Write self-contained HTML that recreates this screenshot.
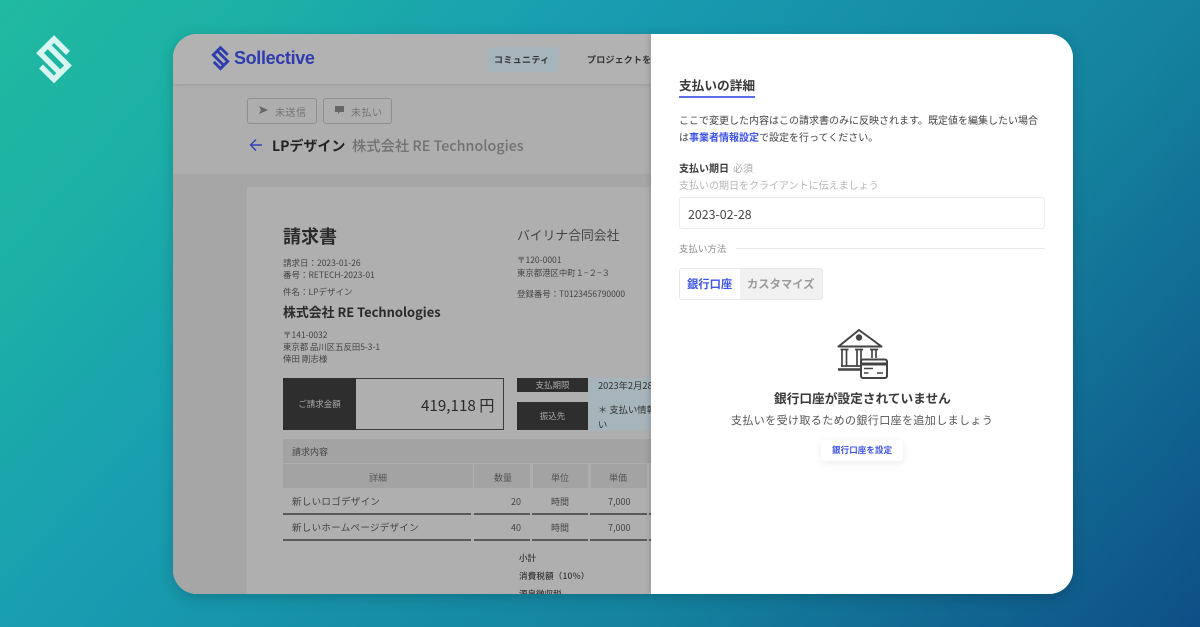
<!DOCTYPE html>
<html lang="ja"><head><meta charset="utf-8"><style>
*{box-sizing:border-box;margin:0;padding:0}
html,body{width:1200px;height:627px;overflow:hidden}
body{position:relative;font-family:"Liberation Sans","Noto Sans CJK JP",sans-serif;background:linear-gradient(132deg,#20baa0 0%,#1cb0a6 15%,#199fb0 32%,#14839f 68%,#0e4f86 100%)}
.t{position:absolute;white-space:nowrap;line-height:1;font-family:"Noto Sans CJK JP",sans-serif}
.b{position:absolute}
#card{position:absolute;left:173px;top:34px;width:900px;height:560px;border-radius:24px;overflow:hidden;background:#fff;box-shadow:0 4px 14px rgba(0,0,0,.18)}
#l{position:absolute;left:0;top:0;width:478px;height:560px;background:#aeaeae;overflow:hidden}
#r{position:absolute;left:478px;top:0;width:422px;height:560px;background:#fff;box-shadow:-2px 0 5px rgba(0,0,0,.12)}
.d{background:#2e2e2e;color:#a8a8a8;text-align:center}
.h{background:#a3a3a3}
.ln{position:absolute;height:1.500px;background:#5a5a5a}
</style></head><body>
<svg class="b" style="left:30px;top:30px" width="48" height="58" viewBox="30 30 48 58" fill="none" stroke="#d6f6ef" stroke-width="5.500" stroke-linejoin="miter"><path d="M68 53 54 39 40 53 59.500 72.500"/><path d="M41 66.500 54 79.500 68 65.500 47.500 45"/></svg>
<div id="card">
<div id="l">
 <div class="b" style="left:0;top:0;width:478px;height:50px;background:#b2b2b2;box-shadow:0 1px 3px rgba(0,0,0,.12)"></div>
 <svg class="b" style="left:34.500px;top:8.500px" width="25" height="30" viewBox="30 30 48 58" fill="none" stroke="#2f3cae" stroke-width="5.500"><path d="M68 53 54 39 40 53 59.500 72.500"/><path d="M41 66.500 54 79.500 68 65.500 47.500 45"/></svg>
 <div class="t" style="left:61px;top:15px;font:600 18px/1 'Liberation Sans',sans-serif;letter-spacing:-.35px;color:#2f3cae">Sollective</div>
 <div class="b" style="left:314px;top:13px;width:72px;height:25px;border-radius:5px;background:#a6b4bb"></div>
 <div class="t" style="left:321px;top:21px;font-size:9px;font-weight:700;letter-spacing:.35px;color:#333">コミュニティ</div>
 <div class="t" style="left:414px;top:21px;font-size:9px;font-weight:700;letter-spacing:.2px;color:#333">プロジェクトを</div>
 <div class="b" style="left:74px;top:64px;width:70px;height:26px;border:1px solid #8e8e8e;border-radius:3px"></div>
 <svg class="b" style="left:86px;top:72px" width="10" height="9" viewBox="0 0 10 9" fill="#666"><path d="M0 0 9 4 0 8 2 4z"/></svg>
 <div class="t" style="left:102px;top:73px;font-size:10px;letter-spacing:.5px;color:#737373">未送信</div>
 <div class="b" style="left:150px;top:64px;width:69px;height:26px;border:1px solid #8e8e8e;border-radius:3px"></div>
 <svg class="b" style="left:162px;top:72px" width="9" height="8" viewBox="0 0 9 8" fill="#666"><path d="M0 0h9v6H5L3 8V6H0z"/></svg>
 <div class="t" style="left:178px;top:73px;font-size:10px;letter-spacing:.5px;color:#737373">未払い</div>
 <svg class="b" style="left:76px;top:104px" width="14" height="14" viewBox="0 0 14 14" fill="none" stroke="#3340b5" stroke-width="1.400"><path d="M13 7H1.500M7 1.500 1.500 7 7 12.500"/></svg>
 <div class="t" style="left:99px;top:105px;font-size:14px;font-weight:700;color:#222">LPデザイン</div>
 <div class="t" style="left:179px;top:105px;font-size:14.300px;font-weight:500;color:#717171">株式会社 RE Technologies</div>
 <div class="b" style="left:0;top:140px;width:478px;height:420px;background:#a6a6a6"></div>
 <div class="b" style="left:74px;top:153px;width:404px;height:407px;background:#afafaf"></div>

 <div class="t" style="left:110px;top:193px;font-size:18px;font-weight:700;color:#2a2a2a">請求書</div>
 <div class="t" style="left:344px;top:195px;font-size:12.800px;color:#444">バイリナ合同会社</div>
 <div class="t" style="left:110px;top:225px;font-size:8.500px;color:#444">請求日：2023-01-26</div>
 <div class="t" style="left:110px;top:237px;font-size:8.500px;color:#444">番号：RETECH-2023-01</div>
 <div class="t" style="left:110px;top:254px;font-size:8.500px;color:#444">件名：LPデザイン</div>
 <div class="t" style="left:110px;top:272px;font-size:12.900px;font-weight:700;color:#2a2a2a">株式会社 RE Technologies</div>
 <div class="t" style="left:110px;top:297px;font-size:8.500px;color:#444">〒141-0032</div>
 <div class="t" style="left:110px;top:309px;font-size:8.400px;color:#444">東京都 品川区五反田5-3-1</div>
 <div class="t" style="left:110px;top:321px;font-size:8.500px;color:#444">倖田 剛志様</div>
 <div class="t" style="left:344px;top:222px;font-size:8.500px;color:#444">〒120-0001</div>
 <div class="t" style="left:344px;top:235px;font-size:8.400px;color:#444">東京都港区中町１−２−３</div>
 <div class="t" style="left:344px;top:256px;font-size:8.450px;color:#444">登録番号：T0123456790000</div>

 <div class="b" style="left:110px;top:344px;width:221px;height:52px;border:1px solid #3a3a3a"></div>
 <div class="b d" style="left:110px;top:344px;width:73px;height:52px;font:8.500px/52px 'Noto Sans CJK JP',sans-serif">ご請求金額</div>
 <div class="t" style="left:248px;top:364px;font-size:15.200px;color:#2a2a2a">419,118 円</div>
 <div class="b d" style="left:344px;top:344px;width:71px;height:14px;font:8.500px/14px 'Noto Sans CJK JP',sans-serif">支払期限</div>
 <div class="b" style="left:415px;top:344px;width:63px;height:52px;background:#a6b4bb"></div>
 <div class="t" style="left:425px;top:347px;font-size:9.300px;color:#333">2023年2月28日</div>
 <div class="b d" style="left:344px;top:368px;width:71px;height:28px;font:8.500px/28px 'Noto Sans CJK JP',sans-serif">振込先</div>
 <div class="t" style="left:425px;top:371px;font-size:9.300px;color:#333">＊ 支払い情報</div>
 <div class="t" style="left:425px;top:386px;font-size:9.300px;color:#333">い</div>

 <div class="b h" style="left:110px;top:405px;width:368px;height:24px"></div>
 <div class="t" style="left:119px;top:413px;font-size:9px;color:#444">請求内容</div>
 <div class="b h" style="left:110px;top:430px;width:190px;height:24px"></div>
 <div class="b h" style="left:301px;top:430px;width:56px;height:24px"></div>
 <div class="b h" style="left:360px;top:430px;width:55px;height:24px"></div>
 <div class="b h" style="left:418px;top:430px;width:56px;height:24px"></div>
 <div class="t" style="left:196px;top:439px;font-size:9px;color:#555">詳細</div>
 <div class="t" style="left:321px;top:439px;font-size:9px;color:#555">数量</div>
 <div class="t" style="left:378px;top:439px;font-size:9px;color:#555">単位</div>
 <div class="t" style="left:436px;top:439px;font-size:9px;color:#555">単価</div>
 <div class="t" style="left:119px;top:463px;font-size:9.500px;letter-spacing:.3px;color:#444">新しいロゴデザイン</div>
 <div class="t" style="left:338px;top:463px;font-size:9px;color:#444">20</div>
 <div class="t" style="left:378px;top:463px;font-size:9px;color:#444">時間</div>
 <div class="t" style="left:435px;top:463px;font-size:9px;color:#444">7,000</div>
 <div class="ln" style="left:110px;top:479px;width:188px"></div><div class="ln" style="left:301px;top:479px;width:56px"></div><div class="ln" style="left:359px;top:479px;width:56px"></div><div class="ln" style="left:417px;top:479px;width:57px"></div><div class="ln" style="left:476px;top:479px;width:2px"></div>
 <div class="t" style="left:119px;top:489px;font-size:9.500px;letter-spacing:.3px;color:#444">新しいホームページデザイン</div>
 <div class="t" style="left:338px;top:489px;font-size:9px;color:#444">40</div>
 <div class="t" style="left:378px;top:489px;font-size:9px;color:#444">時間</div>
 <div class="t" style="left:435px;top:489px;font-size:9px;color:#444">7,000</div>
 <div class="ln" style="left:110px;top:505px;width:188px"></div><div class="ln" style="left:301px;top:505px;width:56px"></div><div class="ln" style="left:359px;top:505px;width:56px"></div><div class="ln" style="left:417px;top:505px;width:57px"></div><div class="ln" style="left:476px;top:505px;width:2px"></div>
 <div class="t" style="left:346px;top:520px;font-size:8.500px;font-weight:500;color:#333">小計</div>
 <div class="t" style="left:346px;top:538px;font-size:8.500px;font-weight:500;letter-spacing:.2px;color:#333">消費税額（10%）</div>
 <div class="t" style="left:346px;top:556px;font-size:8.500px;font-weight:500;color:#333">源泉徴収税</div>
</div>
<div id="r">
 <div class="t" style="left:28px;top:45px;font-size:12.700px;font-weight:700;color:#3a3a3a">支払いの詳細</div>
 <div class="b" style="left:28px;top:62px;width:76px;height:2px;background:#5c6fe8"></div>
 <div class="t" style="left:28px;top:81px;font-size:10px;color:#444">ここで変更した内容はこの請求書のみに反映されます。既定値を編集したい場合</div>
 <div class="t" style="left:28px;top:98px;font-size:10px;color:#444">は<span style="color:#3f55e6;font-weight:700">事業者情報設定</span>で設定を行ってください。</div>
 <div class="t" style="left:28px;top:129px;font-size:10px;font-weight:700;color:#3a3a3a">支払い期日</div>
 <div class="t" style="left:82px;top:129px;font-size:10px;color:#aaa">必須</div>
 <div class="t" style="left:28px;top:146px;font-size:10px;color:#b5b5b5">支払いの期日をクライアントに伝えましょう</div>
 <div class="b" style="left:28px;top:163px;width:366px;height:32px;border:1px solid #ececec;border-radius:3px"></div>
 <div class="t" style="left:37px;top:174px;font-size:12.400px;color:#444">2023-02-28</div>
 <div class="t" style="left:28px;top:210px;font-size:9.300px;letter-spacing:.2px;color:#8a8a8a">支払い方法</div>
 <div class="b" style="left:85px;top:214px;width:309px;height:1px;background:#e8e8e8"></div>
 <div class="b" style="left:28px;top:234px;width:144px;height:32px;background:#f1f1f1;border:1px solid #e8e8e8;border-radius:3px"></div>
 <div class="b" style="left:29px;top:235px;width:60px;height:30px;background:#fff"></div>
 <div class="t" style="left:36px;top:245px;font-size:11.300px;font-weight:700;color:#3f55e6">銀行口座</div>
 <div class="t" style="left:96px;top:245px;font-size:11.300px;font-weight:700;color:#9a9a9a">カスタマイズ</div>
 <svg class="b" style="left:184px;top:292px" width="56" height="54" viewBox="835 326 56 54" fill="none" stroke="#444" stroke-width="1.700"><path d="M838.500 346.500 859 330 881.500 346.500Z" stroke-linejoin="round" stroke-width="2"/><circle cx="859" cy="337.500" r="3.200" fill="#444" stroke="none"/><path d="M840.500 349.500H848.500M842 349.500V365.500M846.500 349.500V365.500M855 349.500H863M857 349.500V365.500M861 349.500V365.500M870 349.500H878M872 349.500V358M876 349.500V358M841 366H860"/><path d="M838 369.500H860" stroke-width="2.500"/><rect x="861" y="359.500" width="26" height="18.500" rx="2" fill="#fff" stroke-width="2"/><path d="M861 364H887" stroke-width="3"/><path d="M864 368.500H873M864 373H868.500M877 373H883" stroke-width="1.500"/></svg>
 <div class="t" style="left:123px;top:358px;font-size:12.700px;font-weight:700;color:#3a3a3a">銀行口座が設定されていません</div>
 <div class="t" style="left:80px;top:381px;font-size:11px;letter-spacing:.4px;color:#555">支払いを受け取るための銀行口座を追加しましょう</div>
 <div class="b" style="left:170px;top:406px;width:82px;height:21px;background:#fff;border-radius:3px;box-shadow:0 2px 8px rgba(0,0,0,.08)"></div>
 <div class="t" style="left:181px;top:412px;font-size:8.500px;font-weight:700;letter-spacing:.1px;color:#3f55e6">銀行口座を設定</div>
</div>
</div>
</body></html>
